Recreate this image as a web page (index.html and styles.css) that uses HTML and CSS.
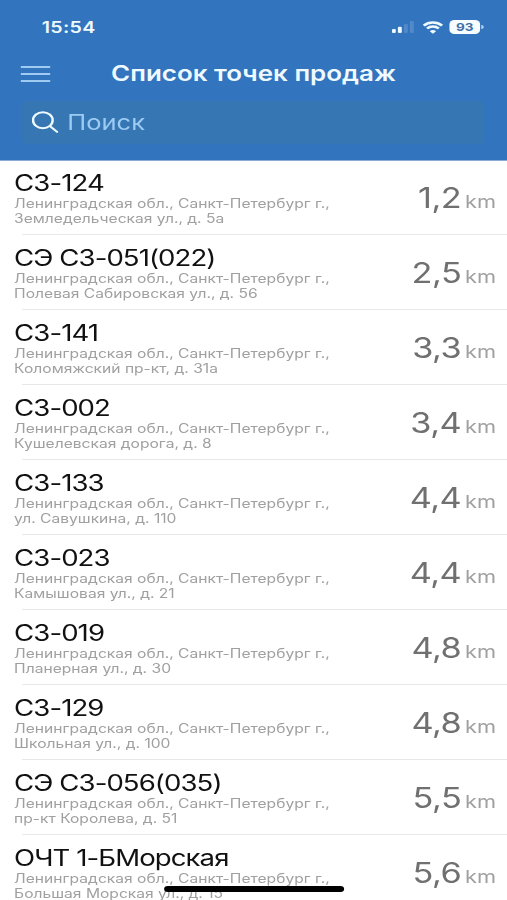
FILE: index.html
```html
<!DOCTYPE html>
<html lang="ru">
<head>
    <meta charset="UTF-8">
    <meta name="viewport" content="width=device-width, initial-scale=1.0">
    <title>Список точек продаж</title>
    <link rel="stylesheet" href="styles.css">
</head>
<body>
    <div class="screen">
        <header class="header">
            <div class="status-bar">
                <span class="time">15:54</span>
                <div class="status-icons">
                    <svg class="signal" viewBox="0 0 18 12">
                        <rect x="0" y="8" width="3.2" height="4" rx="1"/>
                        <rect x="4.9" y="5.8" width="3.2" height="6.2" rx="1"/>
                        <rect class="dim" x="9.8" y="3" width="3.2" height="9" rx="1"/>
                        <rect class="dim" x="14.7" y="0" width="3.2" height="12" rx="1"/>
                    </svg>
                    <svg class="wifi" viewBox="0 0 17 13">
                        <path d="M1 4.6a10.7 10.7 0 0 1 15 0M3.7 7.5a6.9 6.9 0 0 1 9.6 0"/>
                        <path class="dot" d="M8.5 12.8 5.9 10.2a3.7 3.7 0 0 1 5.2 0z"/>
                    </svg>
                    <div class="battery">93</div>
                    <span class="battery-tip"></span>
                </div>
            </div>
            <div class="nav-bar">
                <div class="menu-button"><span></span><span></span><span></span></div>
                <h1>Список точек продаж</h1>
            </div>
            <div class="search">
                <svg class="search-icon" viewBox="0 0 22 23">
                    <circle cx="9" cy="9.2" r="8"/>
                    <path d="m14.8 15.1 5.8 5.8"/>
                </svg>
                <span>Поиск</span>
            </div>
        </header>

        <ul class="list">
            <li>
                <div class="info"><h2>СЗ-124</h2><p>Ленинградская обл., Санкт-Петербург г.,<br>Земледельческая ул., д. 5а</p></div>
                <div class="distance"><span>1,2</span><small>km</small></div>
            </li>
            <li>
                <div class="info"><h2>СЭ СЗ-051(022)</h2><p>Ленинградская обл., Санкт-Петербург г.,<br>Полевая Сабировская ул., д. 56</p></div>
                <div class="distance"><span>2,5</span><small>km</small></div>
            </li>
            <li>
                <div class="info"><h2>СЗ-141</h2><p>Ленинградская обл., Санкт-Петербург г.,<br>Коломяжский пр-кт, д. 31а</p></div>
                <div class="distance"><span>3,3</span><small>km</small></div>
            </li>
            <li>
                <div class="info"><h2>СЗ-002</h2><p>Ленинградская обл., Санкт-Петербург г.,<br>Кушелевская дорога, д. 8</p></div>
                <div class="distance"><span>3,4</span><small>km</small></div>
            </li>
            <li>
                <div class="info"><h2>СЗ-133</h2><p>Ленинградская обл., Санкт-Петербург г.,<br>ул. Савушкина, д. 110</p></div>
                <div class="distance"><span>4,4</span><small>km</small></div>
            </li>
            <li>
                <div class="info"><h2>СЗ-023</h2><p>Ленинградская обл., Санкт-Петербург г.,<br>Камышовая ул., д. 21</p></div>
                <div class="distance"><span>4,4</span><small>km</small></div>
            </li>
            <li>
                <div class="info"><h2>СЗ-019</h2><p>Ленинградская обл., Санкт-Петербург г.,<br>Планерная ул., д. 30</p></div>
                <div class="distance"><span>4,8</span><small>km</small></div>
            </li>
            <li>
                <div class="info"><h2>СЗ-129</h2><p>Ленинградская обл., Санкт-Петербург г.,<br>Школьная ул., д. 100</p></div>
                <div class="distance"><span>4,8</span><small>km</small></div>
            </li>
            <li>
                <div class="info"><h2>СЭ СЗ-056(035)</h2><p>Ленинградская обл., Санкт-Петербург г.,<br>пр-кт Королева, д. 51</p></div>
                <div class="distance"><span>5,5</span><small>km</small></div>
            </li>
            <li>
                <div class="info"><h2>ОЧТ 1-БМорская</h2><p>Ленинградская обл., Санкт-Петербург г.,<br>Большая Морская ул., д. 15</p></div>
                <div class="distance"><span>5,6</span><small>km</small></div>
            </li>
        </ul>
        <div class="home-indicator"></div>
    </div>
</body>
</html>
```
FILE: styles.css
```css
* {
    box-sizing: border-box;
    margin: 0;
    padding: 0;
}
body {
    background: #fff;
    font-family: Inter, "Liberation Sans", sans-serif;
    overflow: hidden;
}
.screen {
    position: relative;
    width: 414px;
    height: 900px;
    overflow: hidden;
    transform: scaleX(1.22464);
    transform-origin: 0 0;
    white-space: nowrap;
}
.header {
    height: 161px;
    background: #3274be;
    border-bottom: 1px solid #8ba9d2;
    color: #eefaff;
}
.status-bar {
    display: flex;
    justify-content: space-between;
    align-items: center;
    height: 54px;
    padding: 0 19.5px 0 34px;
}
.time {
    font-size: 16px;
    font-weight: 600;
    letter-spacing: 0.3px;
}
.status-icons {
    display: flex;
    align-items: center;
}
.signal {
    width: 18px;
    height: 12px;
    margin-right: 7px;
    fill: #eefaff;
}
.signal .dim {
    fill: #5189c9;
}
.wifi {
    width: 17px;
    height: 13px;
    margin-right: 5px;
    fill: none;
    stroke: #eefaff;
    stroke-width: 2.4;
}
.wifi .dot {
    fill: #eefaff;
    stroke: none;
}
.battery {
    width: 25px;
    height: 14px;
    border-radius: 4px;
    background: #f7fcff;
    color: #3e70a8;
    font-size: 11px;
    font-weight: 700;
    line-height: 14px;
    text-align: center;
}
.battery-tip {
    width: 2px;
    height: 4px;
    margin-left: 0.5px;
    border-radius: 0 2px 2px 0;
    background: #b9d6f0;
}
.nav-bar {
    display: grid;
    grid-template-columns: 73px 1fr 73px;
    align-items: center;
    height: 40px;
}
.menu-button {
    display: grid;
    gap: 5.5px;
    width: 24px;
    margin-left: 17px;
}
.menu-button span {
    height: 1.5px;
    background: #9fcbf3;
}
h1 {
    padding-bottom: 2px;
    font-size: 21.2px;
    font-weight: 600;
    line-height: 36px;
    text-align: center;
}
.search {
    display: flex;
    align-items: center;
    width: 377px;
    height: 43px;
    margin: 7px 0 0 18px;
    padding-left: 8px;
    border-radius: 4px;
    background: #3676b3;
    color: #9bcaf3;
    font-size: 20.8px;
}
.search-icon {
    width: 22px;
    height: 23px;
    margin-right: 7px;
    fill: none;
    stroke: #eefaff;
    stroke-width: 2;
    stroke-linecap: round;
}
.list {
    list-style: none;
}
.list li {
    display: flex;
    justify-content: space-between;
    height: 75px;
    padding: 8px 9px 0 11.5px;
    background: linear-gradient(#e8e8e8, #e8e8e8) 18px 73px / 396px 1px no-repeat;
}
h2 {
    color: #111;
    font-size: 22.5px;
    font-weight: 400;
    letter-spacing: -0.75px;
    line-height: 28px;
}
.info p {
    margin-top: -1px;
    color: #a0a0a0;
    font-size: 12.75px;
    line-height: 15px;
}
.distance {
    display: flex;
    align-items: baseline;
    gap: 3px;
    padding-top: 11px;
    color: #707070;
    font-size: 28px;
    letter-spacing: -0.4px;
    line-height: 36px;
}
.distance small {
    color: #a0a0a0;
    font-size: 17.8px;
    letter-spacing: 0;
}
.home-indicator {
    position: absolute;
    left: 134px;
    bottom: 8px;
    width: 147px;
    height: 6px;
    border-radius: 3px;
    background: #000;
}
```
